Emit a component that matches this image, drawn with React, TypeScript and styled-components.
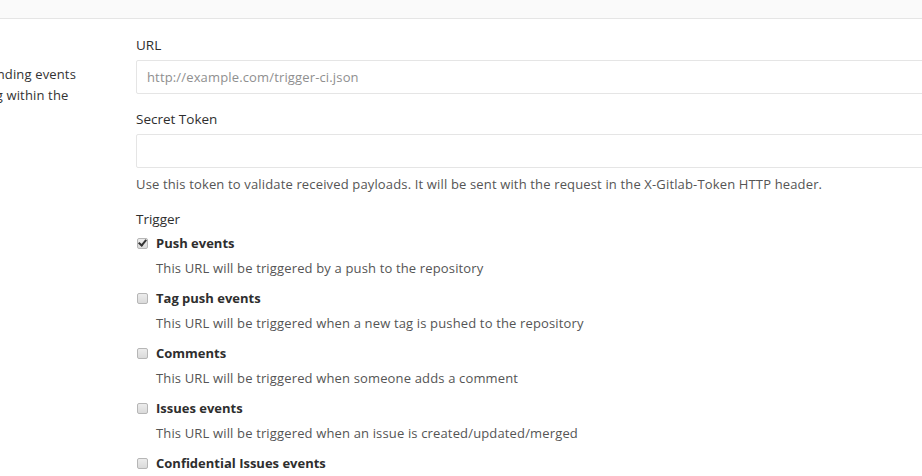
import React from "react";
import styled, { createGlobalStyle } from "styled-components";

const Global = createGlobalStyle`
  html, body { margin: 0; padding: 0; background: #fff; }
  body {
    font-family: "Open Sans", "Noto Sans", "Liberation Sans", sans-serif;
    color: #2e2e2e;
    font-size: 13px;
  }
`;

const Page = styled.div`
  width: 922px;
  height: 476px;
  overflow: hidden;
  background: #fff;
`;

const TopBar = styled.div`
  height: 18px;
  background: #fafafa;
  border-bottom: 1px solid #e5e5e5;
`;

const Row = styled.div`
  display: flex;
  margin-left: -183px;
`;

const Sidebar = styled.div`
  flex: 0 0 319px;
  padding-top: 45px;
  font-size: 13px;
  letter-spacing: 0.15px;
  line-height: 21px;
  color: #333;
  white-space: nowrap;
`;

const Main = styled.div`
  flex: 1;
  padding-top: 16px;
  display: flex;
  flex-direction: column;
`;

const Field = styled.div<{ $gap?: number }>`
  display: flex;
  flex-direction: column;
  margin-bottom: ${(p) => p.$gap ?? 0}px;
`;

const Label = styled.label<{ $mb?: number }>`
  font-size: 13.5px;
  line-height: 20px;
  color: #2e2e2e;
  margin-bottom: ${(p) => p.$mb ?? 5}px;
`;

const Input = styled.input`
  box-sizing: border-box;
  width: 900px;
  height: 34px;
  border: 1px solid #e5e5e5;
  border-radius: 2px;
  padding: 0 10px;
  font-family: inherit;
  font-size: 13px;
  letter-spacing: 0.15px;
  color: #333;
  outline: none;
  &::placeholder { color: #8f8f8f; }
`;

const Help = styled.p`
  margin: 8px 0 0;
  font-size: 13px;
  letter-spacing: 0.15px;
  line-height: 16px;
  color: #555;
  white-space: nowrap;
`;

const Triggers = styled.div`
  display: flex;
  flex-direction: column;
`;

const TriggerItem = styled.div`
  display: flex;
  flex-direction: column;
  height: 55px;
`;

const CheckRow = styled.label`
  display: flex;
  align-items: center;
  gap: 8px;
  height: 20px;
  margin-left: 1px;
`;

const Box = styled.input`
  appearance: none;
  margin: 0;
  width: 11px;
  height: 11px;
  box-sizing: border-box;
  border: 1px solid #b6b6b6;
  border-radius: 2px;
  background: linear-gradient(#ececec, #dadada);
  display: grid;
  place-items: center;
  &:checked::after {
    content: "";
    width: 3px;
    height: 6px;
    border: solid #333;
    border-width: 0 2px 2px 0;
    transform: translate(0, -1px) rotate(40deg);
  }
`;

const CheckText = styled.span`
  font-weight: 700;
  font-size: 13px;
  color: #2e2e2e;
`;

const Desc = styled.div`
  margin: 7px 0 0 20px;
  font-size: 13px;
  letter-spacing: 0.15px;
  line-height: 16px;
  color: #555;
`;

const triggers = [
  { name: "Push events", desc: "This URL will be triggered by a push to the repository", checked: true },
  { name: "Tag push events", desc: "This URL will be triggered when a new tag is pushed to the repository" },
  { name: "Comments", desc: "This URL will be triggered when someone adds a comment" },
  { name: "Issues events", desc: "This URL will be triggered when an issue is created/updated/merged" },
  { name: "Confidential Issues events", desc: "This URL will be triggered when a confidential issue is created/updated/merged" },
];

export default function App() {
  return (
    <Page>
      <Global />
      <TopBar />
      <Row>
        <Sidebar>
          Webhooks can be used for binding events
          <br />
          when something is happening within the
          <br />
          project.
        </Sidebar>
        <Main>
          <Field $gap={15}>
            <Label>URL</Label>
            <Input placeholder="http://example.com/trigger-ci.json" />
          </Field>
          <Field $gap={17}>
            <Label>Secret Token</Label>
            <Input />
            <Help>
              Use this token to validate received payloads. It will be sent with the request in the X-Gitlab-Token HTTP header.
            </Help>
          </Field>
          <Label $mb={4}>Trigger</Label>
          <Triggers>
            {triggers.map((t) => (
              <TriggerItem key={t.name}>
                <CheckRow>
                  <Box type="checkbox" defaultChecked={!!t.checked} />
                  <CheckText>{t.name}</CheckText>
                </CheckRow>
                <Desc>{t.desc}</Desc>
              </TriggerItem>
            ))}
          </Triggers>
        </Main>
      </Row>
    </Page>
  );
}
